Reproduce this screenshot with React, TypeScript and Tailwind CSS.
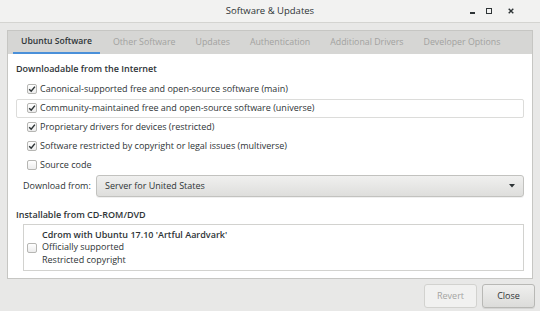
import React from 'react'

const font = { fontFamily: '"Open Sans", "Noto Sans", sans-serif' }

const Check = ({ checked }: { checked?: boolean }) => (
  <span className="flex h-[10px] w-[10px] shrink-0 items-center justify-center rounded-[2px] border border-[#b6b6b3] bg-gradient-to-b from-white to-[#ececec]">
    {checked && (
      <svg width="8" height="8" viewBox="0 0 8 8">
        <path d="M1.2 4.2 L3.2 6.2 L6.9 1.6" fill="none" stroke="#2e3436" strokeWidth="1.5" />
      </svg>
    )}
  </span>
)

const sources = [
  { label: 'Canonical-supported free and open-source software (main)', checked: true },
  { label: 'Community-maintained free and open-source software (universe)', checked: true, focus: true },
  { label: 'Proprietary drivers for devices (restricted)', checked: true },
  { label: 'Software restricted by copyright or legal issues (multiverse)', checked: true },
  { label: 'Source code', checked: false },
]

const tabs = ['Ubuntu Software', 'Other Software', 'Updates', 'Authentication', 'Additional Drivers', 'Developer Options']

export default function App() {
  return (
    <div className="flex h-[311px] w-[540px] flex-col bg-[#e8e8e7] text-[9px] text-[#2e3436]" style={font}>
      {/* title bar */}
      <div className="relative flex h-[23px] shrink-0 items-center justify-center border-b border-[#d4d4d1] bg-[#f2f2f1]">
        <span className="text-[9.5px] text-[#2e3436]">Software &amp; Updates</span>
        <div className="absolute right-[26px] top-0 flex h-full items-center gap-[11px] text-[#2e3436]">
          <span className="ml-[3px] mt-[4px] h-[1.5px] w-[5px] bg-[#2e3436]" />
          <span className="mr-[5px] h-[6px] w-[6px] border-[1.5px] border-[#2e3436]" />
          <svg width="6" height="6" viewBox="0 0 6 6">
            <path d="M0.7 0.7 L5.3 5.3 M5.3 0.7 L0.7 5.3" stroke="#2e3436" strokeWidth="1.4" />
          </svg>
        </div>
      </div>

      {/* notebook */}
      <div className="mx-[7px] mt-[7px] flex flex-col border border-[#c6c6c3] bg-white">
        <div className="flex h-[23px] items-stretch bg-[#d6d6d4] pl-[5px] text-[8.8px]">
          {tabs.map((t, i) => (
            <div
              key={t}
              className={
                i === 0
                  ? 'mr-[3px] flex items-center border-b-2 border-[#4a90d9] px-[8px] text-[8.6px] font-semibold text-[#2e3436]'
                  : 'flex items-center px-[10px] text-[#a2a2a0]'
              }
            >
              {t}
            </div>
          ))}
        </div>

        <div className="flex flex-col px-[8px] pb-[7px] pt-[8px]">
          <div className="font-semibold">Downloadable from the Internet</div>
          <div className="mt-[4px] flex flex-col">
            {sources.map((s) => (
              <div
                key={s.label}
                className={
                  s.focus
                    ? 'flex h-[19px] items-center gap-[3px] rounded-[2px] border border-[#dcdcda] pl-[10px]'
                    : 'flex h-[19px] items-center gap-[3px] border border-transparent pl-[10px]'
                }
              >
                <Check checked={s.checked} />
                <span>{s.label}</span>
              </div>
            ))}
          </div>

          <div className="mt-[0px] flex items-center pl-[7px]">
            <span className="w-[73px]">Download from:</span>
            <div className="flex h-[22px] flex-1 items-center justify-between rounded-[3px] border border-[#c2c2bf] bg-gradient-to-b from-[#f0f0ef] to-[#dededc] px-[8px] shadow-[0_1px_0_rgba(0,0,0,0.06)]">
              <span>Server for United States</span>
              <svg width="6" height="4" viewBox="0 0 6 4">
                <path d="M0 0 L6 0 L3 3.5 Z" fill="#2e3436" />
              </svg>
            </div>
          </div>

          <div className="mt-[11px] font-semibold">Installable from CD-ROM/DVD</div>
          <div className="ml-[7px] mt-[3px] flex h-[47px] items-center gap-[5px] border border-[#d2d2cf] pl-[3px]">
            <Check />
            <div className="flex flex-col leading-[12.5px]">
              <span className="font-semibold">Cdrom with Ubuntu 17.10 'Artful Aardvark'</span>
              <span>Officially supported</span>
              <span>Restricted copyright</span>
            </div>
          </div>
        </div>
      </div>

      {/* buttons */}
      <div className="mr-[5px] mt-[5px] flex justify-end gap-[5px]">
        <button className="h-[24px] w-[53px] rounded-[3px] border border-[#d2d2cf] bg-[#f1f1f0] text-[#a4a4a2]">Revert</button>
        <button className="h-[24px] w-[53px] rounded-[3px] border border-[#b8b8b5] bg-gradient-to-b from-[#efefee] to-[#dcdcda] text-[#2e3436] shadow-[0_1px_0_rgba(0,0,0,0.08)]">Close</button>
      </div>
    </div>
  )
}
